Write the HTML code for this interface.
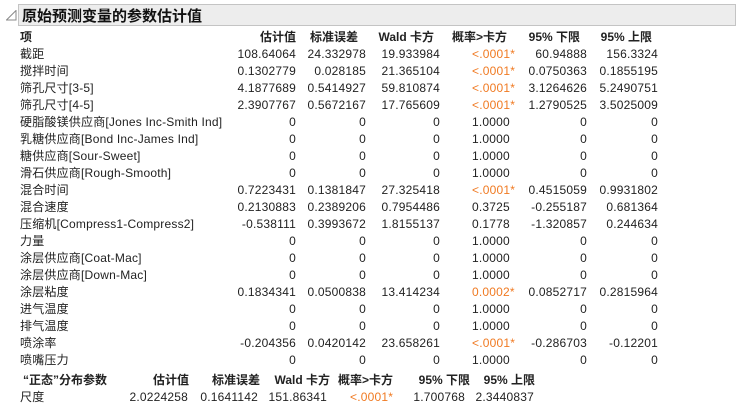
<!DOCTYPE html>
<html><head><meta charset="utf-8"><style>
body{margin:0;width:737px;height:406px;background:#fff;font-family:"Liberation Sans","Noto Sans CJK SC",sans-serif;font-size:12px;color:#222;overflow:hidden;position:relative}
.hdr{position:absolute;left:18px;top:4px;width:716px;height:20px;background:#ededed;border:1px solid #c4c4c4}
.hdr span{position:absolute;left:3px;top:0px;font-size:15px;font-weight:bold;color:#111}
.tri{position:absolute;left:6px;top:10px}
.r{position:absolute;left:0;width:737px;height:17px;top:0}
.r span{position:absolute;top:1px;white-space:nowrap;line-height:17px;letter-spacing:0.2px}
.l{left:20px}
.a{right:441px}.b{right:371px}.c{right:297px}.d{left:472px}.e{right:150px}.f{right:79px}
.h{font-weight:bold}
.h span{letter-spacing:0}
.o{color:#f07a22}
.A{right:549px}.B{right:479px}.C{right:410px}.D{left:350px}.E{right:272px}.F{right:203px}
</style></head><body>
<svg class="tri" width="11" height="11"><polygon points="10,0.5 10,10 0.5,10" fill="none" stroke="#888" stroke-width="1"/></svg>
<div class="hdr"><span>原始预测变量的参数估计值</span></div>

<div class="r h" style="top:28px"><span class="l">项</span><span class="a">估计值</span><span style="right:379px">标准误差</span><span style="right:303px">Wald 卡方</span><span style="left:452px">概率&gt;卡方</span><span style="right:157px">95% 下限</span><span style="right:85px">95% 上限</span></div>
<div class="r" style="top:45px"><span class="l">截距</span><span class="a">108.64064</span><span class="b">24.332978</span><span class="c">19.933984</span><span class="d o">&lt;.0001*</span><span class="e">60.94888</span><span class="f">156.3324</span></div>
<div class="r" style="top:62px"><span class="l">搅拌时间</span><span class="a">0.1302779</span><span class="b">0.028185</span><span class="c">21.365104</span><span class="d o">&lt;.0001*</span><span class="e">0.0750363</span><span class="f">0.1855195</span></div>
<div class="r" style="top:79px"><span class="l">筛孔尺寸[3-5]</span><span class="a">4.1877689</span><span class="b">0.5414927</span><span class="c">59.810874</span><span class="d o">&lt;.0001*</span><span class="e">3.1264626</span><span class="f">5.2490751</span></div>
<div class="r" style="top:96px"><span class="l">筛孔尺寸[4-5]</span><span class="a">2.3907767</span><span class="b">0.5672167</span><span class="c">17.765609</span><span class="d o">&lt;.0001*</span><span class="e">1.2790525</span><span class="f">3.5025009</span></div>
<div class="r" style="top:113px"><span class="l">硬脂酸镁供应商[Jones Inc-Smith Ind]</span><span class="a">0</span><span class="b">0</span><span class="c">0</span><span class="d">1.0000</span><span class="e">0</span><span class="f">0</span></div>
<div class="r" style="top:130px"><span class="l">乳糖供应商[Bond Inc-James Ind]</span><span class="a">0</span><span class="b">0</span><span class="c">0</span><span class="d">1.0000</span><span class="e">0</span><span class="f">0</span></div>
<div class="r" style="top:147px"><span class="l">糖供应商[Sour-Sweet]</span><span class="a">0</span><span class="b">0</span><span class="c">0</span><span class="d">1.0000</span><span class="e">0</span><span class="f">0</span></div>
<div class="r" style="top:164px"><span class="l">滑石供应商[Rough-Smooth]</span><span class="a">0</span><span class="b">0</span><span class="c">0</span><span class="d">1.0000</span><span class="e">0</span><span class="f">0</span></div>
<div class="r" style="top:181px"><span class="l">混合时间</span><span class="a">0.7223431</span><span class="b">0.1381847</span><span class="c">27.325418</span><span class="d o">&lt;.0001*</span><span class="e">0.4515059</span><span class="f">0.9931802</span></div>
<div class="r" style="top:198px"><span class="l">混合速度</span><span class="a">0.2130883</span><span class="b">0.2389206</span><span class="c">0.7954486</span><span class="d">0.3725</span><span class="e">-0.255187</span><span class="f">0.681364</span></div>
<div class="r" style="top:215px"><span class="l">压缩机[Compress1-Compress2]</span><span class="a">-0.538111</span><span class="b">0.3993672</span><span class="c">1.8155137</span><span class="d">0.1778</span><span class="e">-1.320857</span><span class="f">0.244634</span></div>
<div class="r" style="top:232px"><span class="l">力量</span><span class="a">0</span><span class="b">0</span><span class="c">0</span><span class="d">1.0000</span><span class="e">0</span><span class="f">0</span></div>
<div class="r" style="top:249px"><span class="l">涂层供应商[Coat-Mac]</span><span class="a">0</span><span class="b">0</span><span class="c">0</span><span class="d">1.0000</span><span class="e">0</span><span class="f">0</span></div>
<div class="r" style="top:266px"><span class="l">涂层供应商[Down-Mac]</span><span class="a">0</span><span class="b">0</span><span class="c">0</span><span class="d">1.0000</span><span class="e">0</span><span class="f">0</span></div>
<div class="r" style="top:283px"><span class="l">涂层粘度</span><span class="a">0.1834341</span><span class="b">0.0500838</span><span class="c">13.414234</span><span class="d o">0.0002*</span><span class="e">0.0852717</span><span class="f">0.2815964</span></div>
<div class="r" style="top:300px"><span class="l">进气温度</span><span class="a">0</span><span class="b">0</span><span class="c">0</span><span class="d">1.0000</span><span class="e">0</span><span class="f">0</span></div>
<div class="r" style="top:317px"><span class="l">排气温度</span><span class="a">0</span><span class="b">0</span><span class="c">0</span><span class="d">1.0000</span><span class="e">0</span><span class="f">0</span></div>
<div class="r" style="top:334px"><span class="l">喷涂率</span><span class="a">-0.204356</span><span class="b">0.0420142</span><span class="c">23.658261</span><span class="d o">&lt;.0001*</span><span class="e">-0.286703</span><span class="f">-0.12201</span></div>
<div class="r" style="top:351px"><span class="l">喷嘴压力</span><span class="a">0</span><span class="b">0</span><span class="c">0</span><span class="d">1.0000</span><span class="e">0</span><span class="f">0</span></div>

<div class="r h" style="top:371px"><span style="left:23px">“正态”分布参数</span><span style="right:548px">估计值</span><span style="right:477px">标准误差</span><span style="right:407px">Wald 卡方</span><span style="left:338px">概率&gt;卡方</span><span style="right:267px">95% 下限</span><span style="right:202px">95% 上限</span></div>
<div class="r" style="top:388px"><span class="l">尺度</span><span class="A">2.0224258</span><span class="B">0.1641142</span><span class="C">151.86341</span><span class="D o">&lt;.0001*</span><span class="E">1.700768</span><span class="F">2.3440837</span></div>
</body></html>
